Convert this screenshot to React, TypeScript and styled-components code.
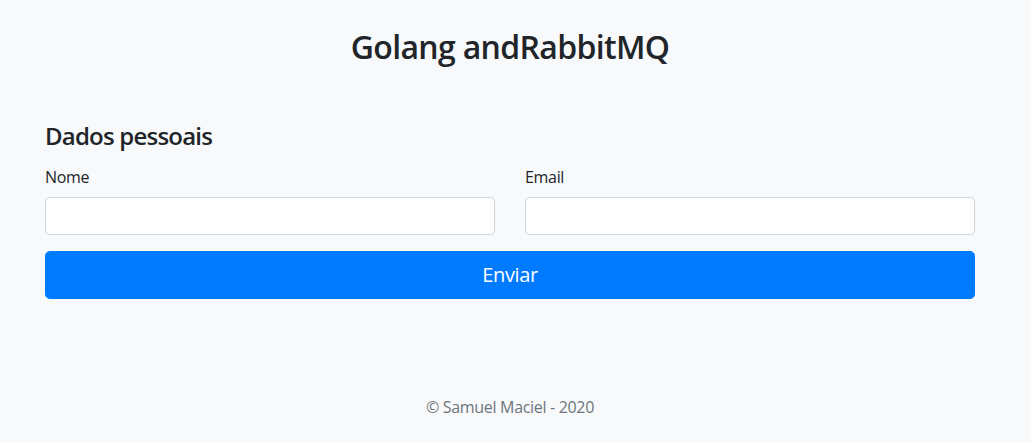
import React from "react";
import styled, { createGlobalStyle } from "styled-components";

const GlobalStyle = createGlobalStyle`
  html, body {
    margin: 0;
    padding: 0;
    background: #f8f9fa;
  }
  body {
    font-family: "Open Sans", "Noto Sans", sans-serif;
    color: #212529;
    font-size: 16px;
    line-height: 1.5;
    letter-spacing: -0.02em;
  }
  * { box-sizing: border-box; }
`;

const Page = styled.div`
  width: 1020px;
  min-height: 443px;
  display: flex;
  flex-direction: column;
`;

const Title = styled.h2`
  margin: 0;
  padding-top: 28px;
  text-align: center;
  font-size: 32px;
  line-height: 1.2;
  font-weight: 600;
  letter-spacing: -0.67px;
`;

const Container = styled.main`
  width: 960px;
  margin: 0 auto;
  padding: 0 15px;
`;

const Form = styled.form`
  display: flex;
  flex-direction: column;
  margin-top: 56px;
`;

const SectionTitle = styled.h4`
  margin: 0 0 14px;
  font-size: 24px;
  line-height: 1.2;
  font-weight: 600;
  letter-spacing: -0.78px;
`;

const Row = styled.div`
  display: grid;
  grid-template-columns: 1fr 1fr;
  column-gap: 30px;
  margin-bottom: 16px;
`;

const Group = styled.div`
  display: flex;
  flex-direction: column;
`;

const Label = styled.label`
  font-size: 16px;
  line-height: 24px;
  margin-bottom: 8px;
`;

const Input = styled.input`
  height: 38px;
  padding: 6px 12px;
  font-size: 16px;
  font-family: inherit;
  color: #495057;
  background: #fff;
  border: 1px solid #ced4da;
  border-radius: 4px;
  outline: none;
`;

const Button = styled.button`
  height: 48px;
  width: 100%;
  border: 1px solid #007bff;
  background: #007bff;
  color: #fff;
  font-family: inherit;
  font-size: 20px;
  line-height: 1.5;
  letter-spacing: -0.02em;
  border-radius: 4.8px;
  padding: 8px 16px;
  cursor: pointer;
`;

const Footer = styled.footer`
  margin-top: 96px;
  text-align: center;
  color: #6c757d;
  font-size: 16px;
  line-height: 24px;
`;

export default function App() {
  return (
    <>
      <GlobalStyle />
      <Page>
        <Title>Golang andRabbitMQ</Title>
        <Container>
          <Form onSubmit={(e) => e.preventDefault()}>
            <SectionTitle>Dados pessoais</SectionTitle>
            <Row>
              <Group>
                <Label htmlFor="nome">Nome</Label>
                <Input id="nome" type="text" />
              </Group>
              <Group>
                <Label htmlFor="email">Email</Label>
                <Input id="email" type="email" />
              </Group>
            </Row>
            <Button type="submit">Enviar</Button>
          </Form>
        </Container>
        <Footer>© Samuel Maciel - 2020</Footer>
      </Page>
    </>
  );
}
